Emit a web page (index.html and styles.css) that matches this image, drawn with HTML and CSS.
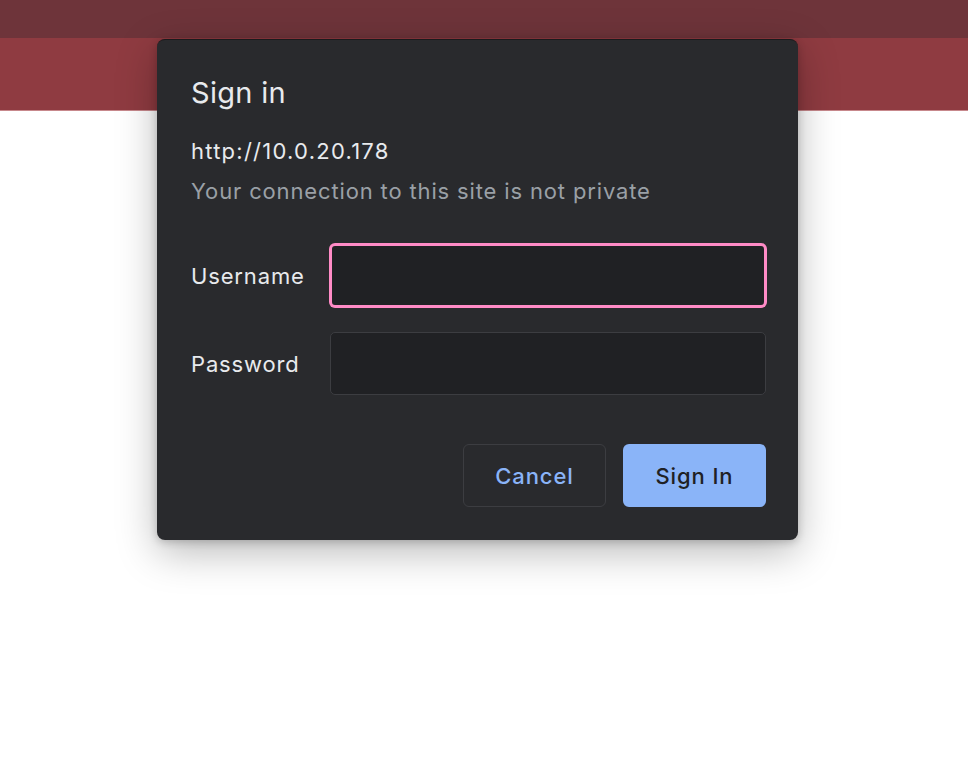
FILE: index.html
```html
<!DOCTYPE html>
<html>
<head>
<meta charset="utf-8">
<link rel="stylesheet" href="styles.css">
</head>
<body>
<div class="topbar"></div>
<div class="redbar"></div>
<div class="page"></div>
<div class="dialog">
  <h1 class="title">Sign in</h1>
  <div class="url">http://10.0.20.178</div>
  <div class="sub">Your connection to this site is not private</div>
  <div class="form">
    <div class="row">
      <label class="label">Username</label>
      <div class="input focused"></div>
    </div>
    <div class="row">
      <label class="label">Password</label>
      <div class="input"></div>
    </div>
  </div>
  <div class="actions">
    <button class="btn cancel">Cancel</button>
    <button class="btn primary">Sign In</button>
  </div>
</div>
</body>
</html>
```
FILE: styles.css
```css
html, body {
  margin: 0;
  padding: 0;
  background: #ffffff;
  font-family: Inter, "Liberation Sans", sans-serif;
}
.topbar {
  height: 38px;
  background: #6e343a;
}
.redbar {
  height: 72px;
  background: #8f3b41;
  border-bottom: 1px solid #c7888c;
}
.dialog {
  position: absolute;
  left: 157px;
  top: 39px;
  width: 641px;
  height: 501px;
  box-sizing: border-box;
  background: #292a2d;
  border-radius: 8px;
  border-top: 1px solid #1a1a1c;
  padding: 35px 32px 0 34px;
  box-shadow: 0 12px 40px rgba(0, 0, 0, 0.28), 0 2px 8px rgba(0, 0, 0, 0.2);
  color: #e8eaed;
}
.title {
  margin: 0;
  font-size: 29px;
  line-height: 36px;
  font-weight: 400;
  letter-spacing: 0.3px;
  color: #e8eaed;
}
.url {
  margin-top: 26px;
  font-size: 22px;
  line-height: 28px;
  letter-spacing: 1.25px;
  color: #e8eaed;
}
.sub {
  margin-top: 12px;
  font-size: 22px;
  line-height: 28px;
  letter-spacing: 0.85px;
  color: #9aa0a6;
}
.form {
  margin-top: 39px;
  display: flex;
  flex-direction: column;
  gap: 25px;
}
.row {
  display: flex;
  align-items: center;
}
.label {
  width: 139px;
  font-size: 22px;
  letter-spacing: 0.85px;
  color: #e8eaed;
}
.input {
  flex: 1;
  height: 63px;
  box-sizing: border-box;
  background: #202124;
  border: 1px solid #3c3d41;
  border-radius: 5px;
}
.input.focused {
  border: 2px solid #ff8bc6;
  box-shadow: 0 0 0 1px #ff8bc6;
}
.actions {
  margin-top: 49px;
  display: flex;
  justify-content: flex-end;
  gap: 17px;
}
.btn {
  width: 143px;
  height: 63px;
  box-sizing: border-box;
  border-radius: 6px;
  font-family: Inter, "Liberation Sans", sans-serif;
  font-size: 22px;
  font-weight: 500;
  letter-spacing: 0.9px;
  cursor: pointer;
}
.cancel {
  background: transparent;
  border: 1px solid #3c3d41;
  color: #8ab4f8;
}
.primary {
  background: #8ab4f8;
  border: none;
  color: #202124;
}
```
